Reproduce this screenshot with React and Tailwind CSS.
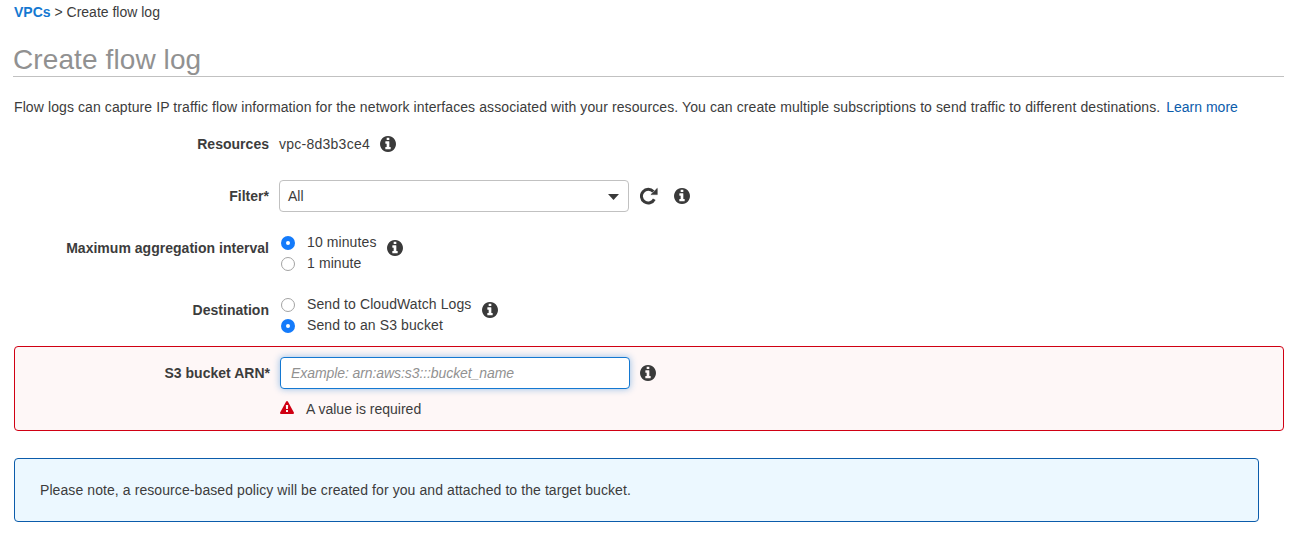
function InfoIcon({ className = "" }) {
  return (
    <svg viewBox="0 128 1536 1536" className={"size-4 shrink-0 fill-[#3a3a3a] " + className}>
      <path d="M1024 1376v-160q0-14-9-23t-23-9h-96v-512q0-14-9-23t-23-9h-320q-14 0-23 9t-9 23v160q0 14 9 23t23 9h96v320h-96q-14 0-23 9t-9 23v160q0 14 9 23t23 9h448q14 0 23-9t9-23zm-128-896v-160q0-14-9-23t-23-9h-192q-14 0-23 9t-9 23v160q0 14 9 23t23 9h192q14 0 23-9t9-23zm640 416q0 209-103 385.5t-279.5 279.5-385.5 103-385.5-103-279.5-279.5-103-385.5 103-385.5 279.5-279.5 385.5-103 385.5 103 279.5 279.5 103 385.5z" />
    </svg>
  );
}

function RefreshIcon() {
  return (
    <svg viewBox="0 0 18 18" className="ml-[11px] size-[18px] shrink-0">
      <path d="M14.300 12.200A6.800 6.800 0 1 1 13.300 4.600" fill="none" stroke="#3a3a3a" strokeWidth="3" />
      <path d="M17.300 1.300V7.600H10.900z" fill="#3a3a3a" stroke="#3a3a3a" strokeWidth="0.5" strokeLinejoin="round" />
    </svg>
  );
}

function WarningIcon() {
  return (
    <svg viewBox="0 0 1792 1664" className="-mt-[3px] h-[13px] w-[14px] shrink-0 fill-[#d00013]">
      <path d="M1024 1375v-190q0-14-9.500-23.500t-22.500-9.500h-192q-13 0-22.500 9.500t-9.500 23.500v190q0 14 9.500 23.500t22.500 9.500h192q13 0 22.500-9.500t9.500-23.500zm-2-374l18-459q0-12-10-19-13-11-24-11h-220q-11 0-24 11-10 7-10 21l17 457q0 10 10 16.500t24 6.500h185q14 0 23.500-6.500t10.500-16.500zm-14-934l768 1408q35 63-2 126-17 29-46.500 46t-63.500 17h-1536q-34 0-63.500-17t-46.500-46q-37-63-2-126l768-1408q17-31 47-49t65-18 65 18 47 49z" />
    </svg>
  );
}

function Label({ children }) {
  return <div className="w-[255px] shrink-0 text-right font-bold tracking-[0.02px]">{children}</div>;
}

function Radio({ checked, children }) {
  return (
    <div className="flex h-[21px] items-center">
      <span
        className={
          checked
            ? "mt-[3px] flex size-[14px] items-center justify-center rounded-full bg-[#147bfb]"
            : "mt-[3px] flex size-[14px] rounded-full border border-[#a3a3a3] bg-white"
        }
      >
        {checked && <span className="size-1 rounded-full bg-white" />}
      </span>
      <span className="ml-3 tracking-[0.1px]">{children}</span>
    </div>
  );
}

export default function App() {
  return (
    <main className="h-[551px] w-[1297px] overflow-hidden bg-white pr-[13px] pl-[14px] font-['Liberation_Sans',Arial,sans-serif] text-sm leading-5 whitespace-nowrap text-[#3c3c3c]">
      <nav className="h-10 pt-[2px]">
        <span className="font-bold text-[#1478d1]">VPCs</span>
        <span> &gt; Create flow log</span>
      </nav>
      <h1 className="-ml-px h-[37px] border-b border-[#c1c1c1] pt-1 text-[28px] leading-8 tracking-[0.1px] text-[#919191]">
        Create flow log
      </h1>
      <p className="flex pt-5">
        <span className="tracking-[0.096px]">
          Flow logs can capture IP traffic flow information for the network interfaces associated with your resources. You can create multiple subscriptions to send traffic to different destinations.
        </span>
        <span className="ml-[6px] text-[#0b5cab]">Learn more</span>
      </p>
      <section className="flex h-[54px] items-center">
        <Label>Resources</Label>
        <span className="ml-[10px] tracking-[0.25px]">vpc-8d3b3ce4</span>
        <InfoIcon className="ml-[10px]" />
      </section>
      <section className="flex h-[50px] items-center">
        <Label>Filter*</Label>
        <div className="ml-[10px] flex h-8 w-[350px] items-center justify-between rounded-[4px] border border-[#c1c1c1] pr-[9px] pl-2">
          <span>All</span>
          <svg viewBox="0 0 11 6" className="mt-px h-[6px] w-[11px] fill-[#3a3a3a]">
            <path d="M0 0h11L5.500 6z" />
          </svg>
        </div>
        <RefreshIcon />
        <InfoIcon className="ml-4" />
      </section>
      <section className="flex h-[54px] items-center">
        <Label>Maximum aggregation interval</Label>
        <div className="mt-2 ml-3 h-[42px]">
          <Radio checked>10 minutes</Radio>
          <Radio>1 minute</Radio>
        </div>
        <InfoIcon className="ml-[11px]" />
      </section>
      <section className="flex h-[70px] items-center">
        <Label>Destination</Label>
        <div className="mt-2 ml-3 h-[42px]">
          <Radio>Send to CloudWatch Logs</Radio>
          <Radio checked>Send to an S3 bucket</Radio>
        </div>
        <InfoIcon className="ml-[11px]" />
      </section>
      <section className="mt-px h-[85px] rounded-[4px] border border-[#d00013] bg-[#fef7f7] pt-[10px]">
        <div className="flex h-8 items-center">
          <Label>S3 bucket ARN*</Label>
          <div className="ml-[10px] flex h-8 w-[350px] items-center rounded-[4px] border border-[#1478d1] bg-white pl-[10px] tracking-[-0.08px] text-[#919191] italic shadow-[0_0_7px_rgba(20,120,209,0.45)]">
            Example: arn:aws:s3:::bucket_name
          </div>
          <InfoIcon className="ml-[10px]" />
        </div>
        <div className="mt-[10px] ml-[265px] flex items-center gap-3">
          <WarningIcon />
          <span>A value is required</span>
        </div>
      </section>
      <aside className="mt-[27px] flex h-16 w-[1245px] items-center rounded-[4px] border border-[#0b5cab] bg-[#ecf8ff] pl-[25px] tracking-[0.084px]">
        Please note, a resource-based policy will be created for you and attached to the target bucket.
      </aside>
    </main>
  );
}
